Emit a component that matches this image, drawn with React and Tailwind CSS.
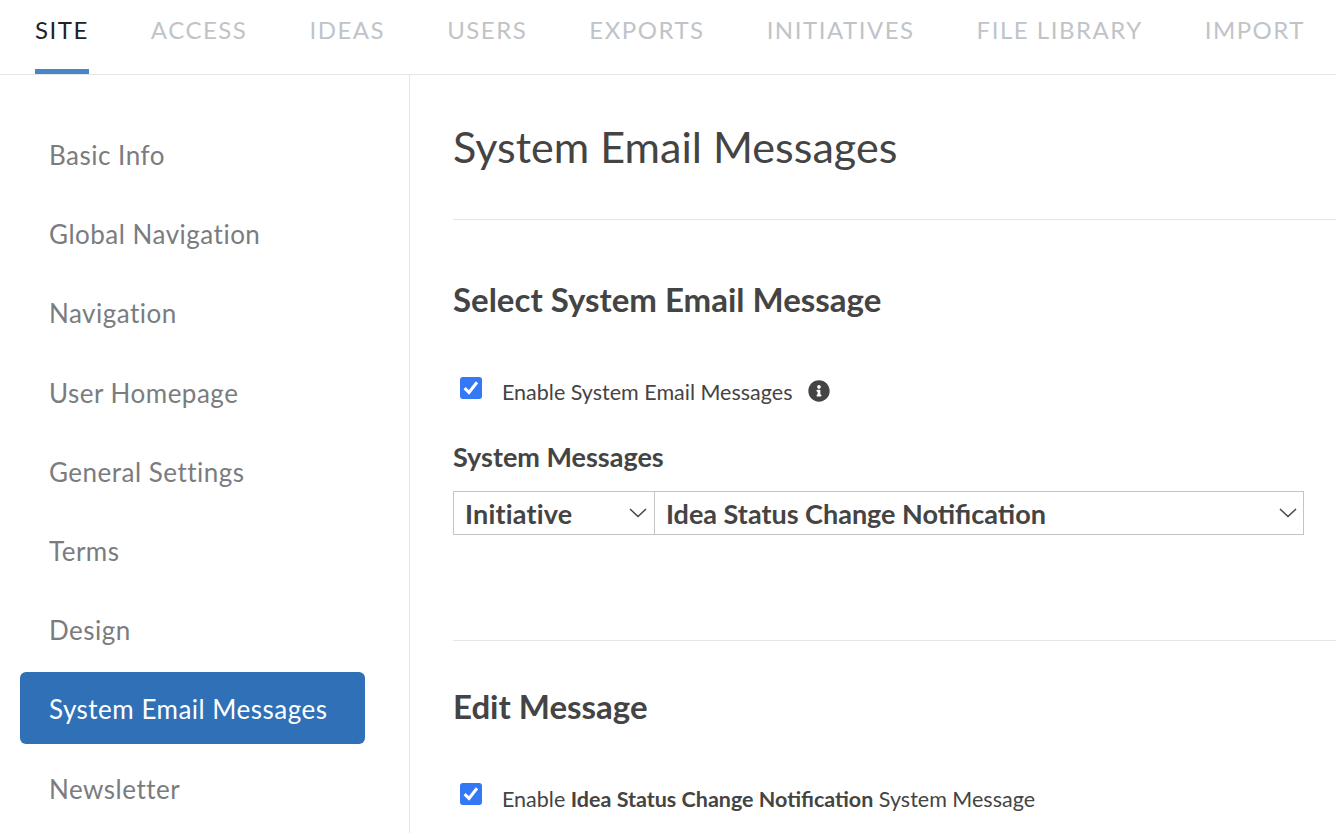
const tabs = ["SITE", "ACCESS", "IDEAS", "USERS", "EXPORTS", "INITIATIVES", "FILE LIBRARY", "IMPORT"];
const items = ["Basic Info", "Global Navigation", "Navigation", "User Homepage", "General Settings", "Terms", "Design", "System Email Messages", "Newsletter"];

function Check() {
  return (
    <span className="mb-2 flex h-[22px] w-[22px] shrink-0 items-center justify-center rounded-[3px] bg-[#3478f6]">
      <svg width="22" height="22" viewBox="0 0 22 22" fill="none">
        <path d="M4.6 11.2 L9 15.4 L17 5.2" stroke="#fff" strokeWidth="3" />
      </svg>
    </span>
  );
}

function Chevron() {
  return (
    <svg width="18" height="10" viewBox="0 0 18 10" fill="none" className="shrink-0">
      <path d="M1 1 L9 8.5 L17 1" stroke="#444" strokeWidth="1.5" />
    </svg>
  );
}

export default function App() {
  return (
    <div className="h-[833px] w-[1336px] overflow-hidden bg-white font-['Lato',sans-serif] text-[#444]">
      <div className="flex h-[75px] gap-[62px] border-b border-[#e6e6e6] pl-[35px]">
        {tabs.map((t, i) => (
          <div
            key={t}
            className={`h-[74px] whitespace-nowrap pt-[13px] text-[24px] leading-[34px] tracking-[1.52px] ${
              i === 0 ? "border-b-[5px] border-[#4a86c5] text-[#222]" : "text-[#c0c4c9]"
            }`}
          >
            {t}
          </div>
        ))}
      </div>
      <div className="flex h-[758px]">
        <div className="flex w-[410px] shrink-0 flex-col gap-[7.2px] border-r border-[#e6e6e6] pl-5 pr-11 pt-[43px]">
          {items.map((t, i) => (
            <div
              key={t}
              className={`flex h-[72px] shrink-0 items-center rounded-md pl-[29px] pt-[3px] text-[26px] tracking-[0.5px] ${
                i === 7 ? "bg-[#2f70b7] text-white" : "text-[#7a7c7f]"
              }`}
            >
              {t}
            </div>
          ))}
        </div>
        <div className="min-w-0 flex-1 pl-[43px]">
          <h1 className="flex h-[145px] items-center border-b border-[#e6e6e6] pb-[1px] text-[43.1px] font-normal">System Email Messages</h1>
          <h2 className="mt-[57px] text-[33px] font-bold leading-[44px]">Select System Email Message</h2>
          <div className="mt-14 flex h-[30px] items-center pl-[7px] text-[21.5px]">
            <Check />
            <span className="ml-5">Enable System Email Messages</span>
            <svg width="22" height="22" viewBox="0 0 512 512" className="mb-[2px] ml-4" fill="#444">
              <path d="M256 8C119.043 8 8 119.083 8 256c0 136.997 111.043 248 248 248s248-111.003 248-248C504 119.083 392.957 8 256 8zm0 110c23.196 0 42 18.804 42 42s-18.804 42-42 42-42-18.804-42-42 18.804-42 42-42zm56 254c0 6.627-5.373 12-12 12h-88c-6.627 0-12-5.373-12-12v-24c0-6.627 5.373-12 12-12h12v-64h-12c-6.627 0-12-5.373-12-12v-24c0-6.627 5.373-12 12-12h64c6.627 0 12 5.373 12 12v100h12c6.627 0 12 5.373 12 12v24z" />
            </svg>
          </div>
          <div className="mt-8 text-[27px] font-bold leading-[36px]">System Messages</div>
          <div className="mt-4 flex h-11 w-[851px] text-[27px] font-bold">
            <div className="flex w-[202px] shrink-0 items-center justify-between border border-[#c4c4c4] pl-[11px] pr-[7px]">
              <span className="mt-[2px] tracking-[0.2px]">Initiative</span>
              <Chevron />
            </div>
            <div className="-ml-px flex flex-1 items-center justify-between border border-[#c4c4c4] pl-[11px] pr-[6px]">
              <span className="mt-[2px]">Idea Status Change Notification</span>
              <Chevron />
            </div>
          </div>
          <div className="mt-[105px] border-t border-[#e6e6e6]" />
          <h2 className="mt-[43px] text-[33px] font-bold leading-[44px]">Edit Message</h2>
          <div className="mt-[55px] flex h-[30px] items-center pl-[7px] text-[21.5px]">
            <Check />
            <span className="ml-5 pt-[2px]">
              Enable <b>Idea Status Change Notification</b> System Message
            </span>
          </div>
        </div>
      </div>
    </div>
  );
}
